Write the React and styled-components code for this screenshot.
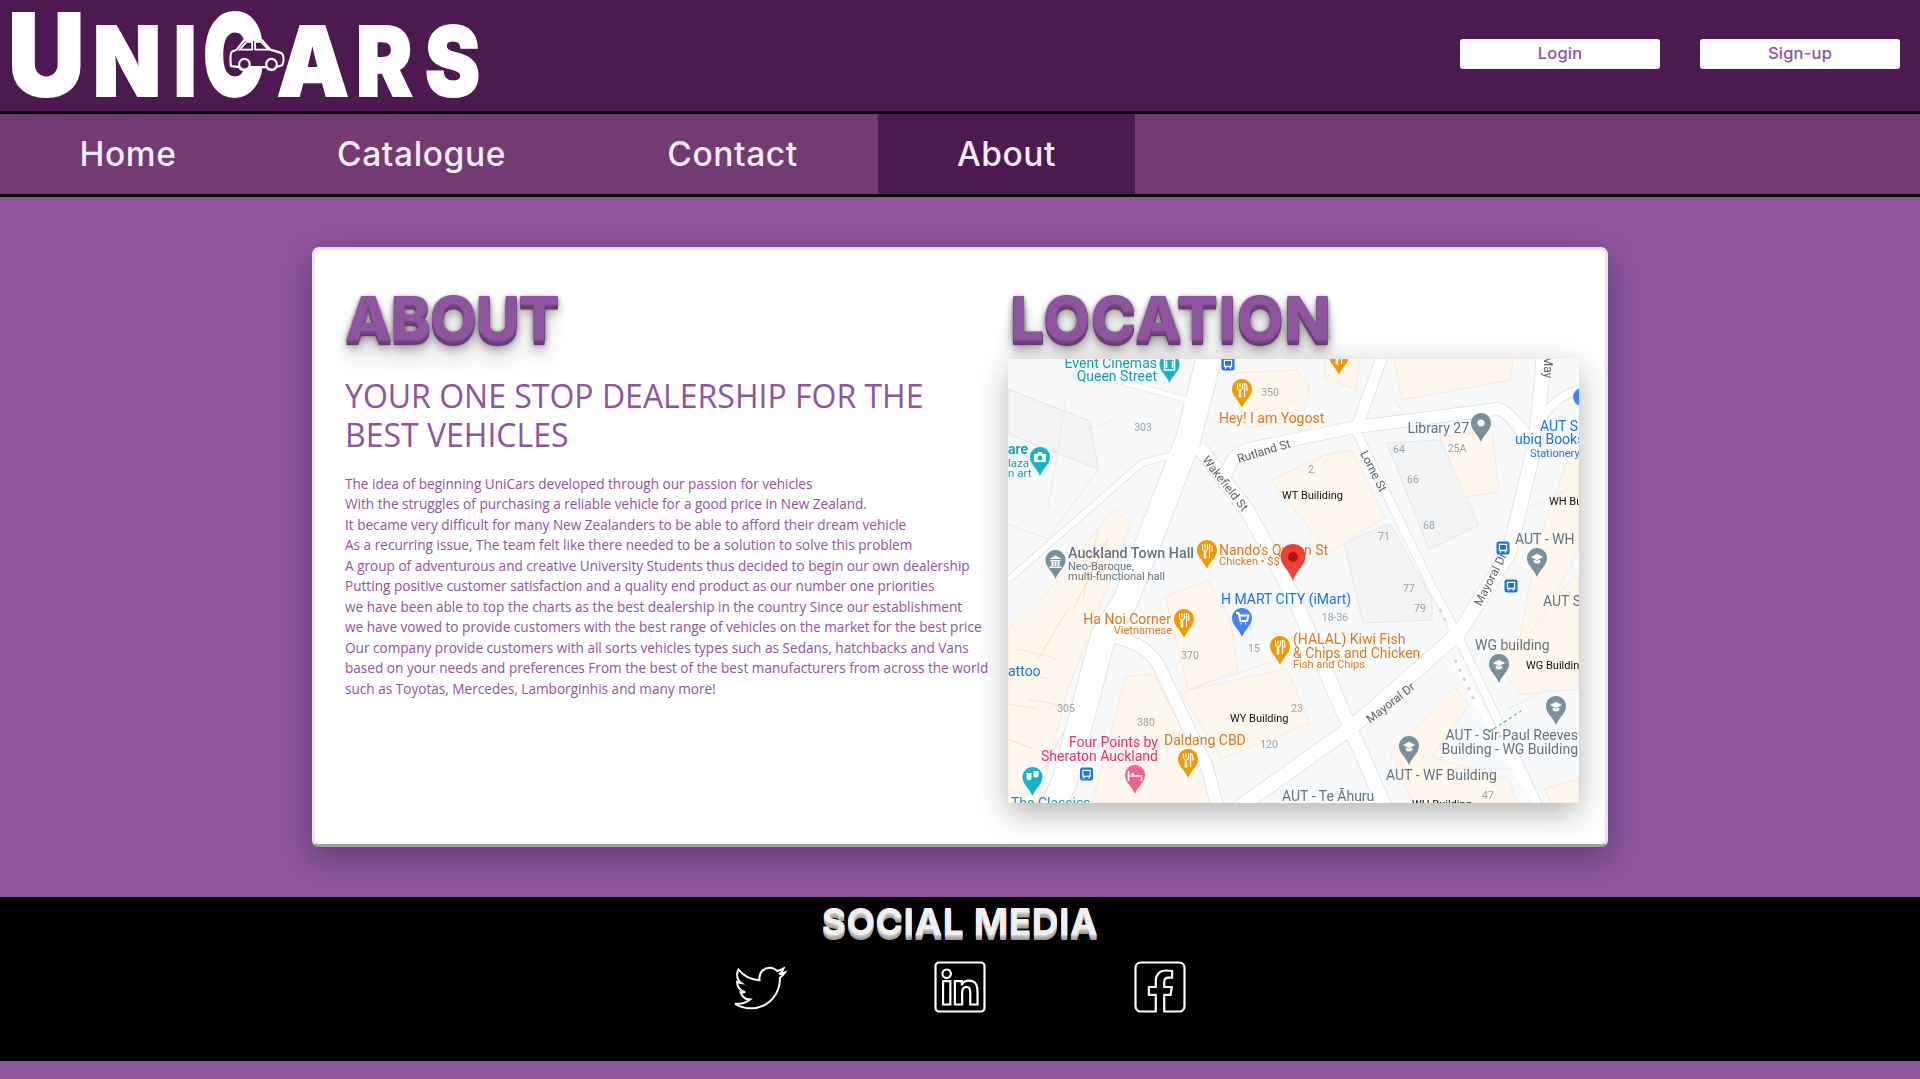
import React from 'react';
import styled, { createGlobalStyle } from 'styled-components';
import { FaTwitter, FaLinkedin, FaFacebookSquare } from 'react-icons/fa';

const Global = createGlobalStyle`
  html, body { margin: 0; padding: 0; background: #8e549e; }
  * { box-sizing: border-box; }
`;
const Page = styled.div`
  width: 100%; min-height: 1079px; background: #8e549e; display: flex; flex-direction: column;
  font-family: "Open Sans", sans-serif;
`;
const Header = styled.header`
  height: 114px; background: #4d1950; border-bottom: 3px solid #000; display: flex;
  align-items: flex-start; justify-content: space-between; padding-right: 20px;
`;
const Logo = styled.div`
  position: relative; display: flex; align-items: flex-end; height: 97px; margin-left: 8px; color: #fff;
  font-family: Inter, "Liberation Sans", sans-serif; font-weight: 900; line-height: 1;
  -webkit-text-stroke: 2px #fff;
`;
const LogoLetter = styled.span`
  display: block; font-size: ${p => p.$size}px; width: ${p => p.$w}px; margin-left: ${p => p.$gap || 0}px;
  line-height: ${p => p.$size * 0.727}px; transform: scaleX(${p => p.$sx}); transform-origin: left bottom;
  white-space: nowrap;
`;
const LogoCar = styled.svg`
  position: absolute; left: 220px; top: 38px; width: 58px; height: 35px;
`;
const Auth = styled.div`display: flex; gap: 40px; padding-top: 39px;`;
const AuthButton = styled.button`
  width: 200px; height: 30px; border: 0; border-radius: 3px; background: #fff; color: #8e549e; padding: 0 0 2px;
  font: 500 16.500px Inter, sans-serif; letter-spacing: .2px;
`;
const Nav = styled.nav`
  height: 83px; background: #733a74; border-bottom: 3px solid #000; display: flex;
`;
const Tab = styled.a`
  width: ${p => p.$w}px; height: 80px; display: flex; align-items: center; justify-content: center;
  background: ${p => p.$active ? '#4d1950' : 'transparent'}; color: #f2eef3;
  font: 500 33.500px Inter, sans-serif; letter-spacing: .6px; padding-bottom: 1px;
`;
const Main = styled.main`padding: 50px 312px;`;
const Card = styled.section`
  height: 600px; background: #fff; border: 3px solid #e6e6e6; border-bottom-color: #a0a0a0; border-radius: 7px;
  box-shadow: 0 10px 30px rgba(0,0,0,.3); display: grid; grid-template-columns: 663px 571px; padding: 27px 0 0 30px;
`;
const Shadow3d = `
  text-shadow: 0 1px 0 #7a4689, 0 2px 0 #764285, 0 3px 0 #713e80, 0 4px 0 #6d3a7c, 0 5px 0 #693678,
    0 6px 1px rgba(0,0,0,.1), 0 0 5px rgba(0,0,0,.1), 0 1px 3px rgba(0,0,0,.3), 0 3px 5px rgba(0,0,0,.2),
    0 5px 10px rgba(0,0,0,.25), 0 10px 10px rgba(0,0,0,.2), 0 20px 20px rgba(0,0,0,.15);
`;
const Title = styled.h1`
  margin: 0; padding-left: ${p => p.$pad || 0}px; font: 800 61px/82px Inter, sans-serif; letter-spacing: ${p => p.$ls}px;
  color: #8e549e; height: 82px; ${Shadow3d}
`;
const Sub = styled.h2`
  margin: 17px 0 0; font: 400 32px/39px "Open Sans", sans-serif; color: #8e549e; width: 640px;
`;
const Body = styled.p`
  margin: 20px 0 0; font: 400 13.600px/20.45px "Open Sans", sans-serif; color: #8e549e; white-space: nowrap;
`;
const MapBox = styled.div`
  width: 571px; height: 444px; box-shadow: 0 10px 30px rgba(0,0,0,.3); background: #f8f9fa; overflow: hidden;
`;
const MapSvg = styled.svg`display: block; width: 571px; height: 444px; font-family: Roboto, sans-serif; filter: blur(.25px);`;
const Footer = styled.footer`
  height: 164px; background: #000; display: flex; flex-direction: column; align-items: center;
`;
const FooterTitle = styled.h3`
  margin: 0; padding-top: 2px; font: 700 37px/46px Inter, sans-serif; letter-spacing: .6px; color: #f0f0f0;
  text-shadow: 0 1px 0 #ccc, 0 2px 0 #c0c0c0, 0 3px 0 #b0b0b0, 0 4px 0 #a5a5a5, 0 5px 0 #999;
`;
const Socials = styled.div`display: flex; margin-top: 15px;`;
const Social = styled.a`
  width: 200px; display: flex; justify-content: center; color: #fff; height: 54px; align-items: center;
  svg { fill: none; stroke: #fff; overflow: visible; }
  svg path { fill: none; }
`;

const pin = 'M0 0c-5.6 0-10 4.5-10 10 0 7.5 7 11 10 19 3-8 10-11.500 10-19 0-5.500-4.400-10-10-10z';
const colors = { food: '#f29900', teal: '#12b5cb', gray: '#78909c', blue: '#4285f4', pink: '#f06292' };
function Glyph({ kind }) {
  if (kind === 'food') return <path d="M-4.500 4.500v4c0 1.500 1 2 1.800 2.300v7h1.400v-7C-.5 10.500.5 10 .5 8.500v-4M-2 4.500v4M2.500 18V4.500c1.500 0 2.500 2 2.500 6.500H3.500" fill="none" stroke="#fff" strokeWidth="1.200" />;
  if (kind === 'edu') return <path d="M-6.500 9 0 5.500 6.500 9 0 12.500zM-3.500 12v2.500c2 1.600 5 1.600 7 0V12" fill="#fff" stroke={colors.gray} strokeWidth=".5" />;
  if (kind === 'cart') return <path d="M-6 5h2.500l2 8h6.500l1.500-5.500h-9M-1.500 15.500h1M3 15.500h1" fill="none" stroke="#fff" strokeWidth="2" />;
  if (kind === 'hall') return <path d="M-6 9 0 5.500 6 9zM-5 10h10v1.500h-10zM-4 12h2v4h-2zM-1 12h2v4h-2zM2 12h2v4H2zM-6 16.500H6V18H-6z" fill="#fff" />;
  if (kind === 'bed') return <path d="M-6.500 6v10M6.500 16v-5h-13M-4 9h3" fill="none" stroke="#fff" strokeWidth="1.600" />;
  if (kind === 'camera') return <g><path d="M-6 7h3l1.500-2h3L3 7h3v8H-6z" fill="#fff" /><circle cy="11" r="2.500" fill="#12b5cb" /></g>;
  if (kind === 'film') return <path d="M-5 5h10v11H-5zM-3 7v7M3 7v7" fill="none" stroke="#fff" strokeWidth="1.500" />;
  if (kind === 'mask') return <path d="M-6 6h5v5c0 3-5 3-5 0zM1 4h5v4c0 3-3 3-5 2z" fill="#fff" />;
  return <circle cy="10" r="3.500" fill="#fff" />;
}
const Pin = ({ x, y, c, g }) => (
  <g transform={`translate(${x} ${y})`}>
    <path d={pin} fill={colors[c]} />
    <Glyph kind={g} />
  </g>
);
const Bus = ({ x, y }) => (
  <g transform={`translate(${x - 6.500} ${y - 6.500})`}>
    <rect width="13" height="13" rx="2.500" fill="#1a73e8" />
    <path d="M3 3h7v6H3zM4 10v1.200M9 10v1.200" fill="none" stroke="#fff" strokeWidth="1.400" />
    <rect x="3.500" y="3.500" width="6" height="3" fill="#1a73e8" />
  </g>
);
const roads = [
  ['M202 -5 180 81 118 241 95 278 57 421 44 450', 25],
  ['M375 -5 348 71', 11],
  ['M218 116C222 102 228 94 240 90L348 68 489 50C500 50 510 68 524 84', 12],
  ['M191 88 241 154 287 241 340 364 378 450', 14],
  ['M348 72 424 228 447 271 532 450', 8],
  ['M536 -5 528 81 501 194 451 274 344 368 229 450', 14],
  ['M96 276C125 280 140 290 150 305L199 408 210 450', 12],
  ['M172 94 134 104 0 221', 6],
  ['M107 21 180 41', 5],
  ['M571 30C545 40 535 55 528 70', 8],
];
const peach = [
  '263,121 317,96 344,91 377,158 321,194',
  '386,-1 505,-1 502,21 394,41',
  '225,14 289,11 302,28 294,61 237,69',
  '317,-1 352,-1 348,31 317,19',
  '432,78 484,71 491,133 457,138',
  '0,270 40,232 106,150 123,165 95,240 60,330 30,444 0,444',
  '157,238 200,221 222,260 230,311 180,331',
  '180,331 279,310 302,364 214,400 172,332',
  '84,444 118,318 145,315 195,410 210,444',
  '382,394 447,328 461,346 424,398 501,421 509,444 405,444',
  '484,298 571,215 571,330 512,335',
  '536,430 571,420 571,444 544,444',
  '560,100 571,85 571,190 540,250 510,290 528,190',
];
const gray = ['379,84 432,81 471,166 421,191', '336,184 382,164 424,240 424,261 355,264', '0,30 82,62 90,110 0,75'];
const lines = ['M0 165 40 180 90 110M58 40 40 150M107 60 82 70', 'M215 120 225 90M300 120 330 90', 'M180 331 272 300M245 280 235 235M400 60 386 40M560 130 500 160', 'M440 410 520 410', 'M500 350 540 330'];
const hallLines = ['M30 300 60 250M20 340 70 350M40 400 75 340', 'M100 180 65 250M90 170 75 240M75 200 105 210', 'M0 345 30 350M0 380 25 390M10 290 50 300M0 310 40 320'];

const T = ({ x, y, c, s = 14, a, w, children, r }) => (
  <text x={x} y={y} fill={c} fontSize={s} textAnchor={a} fontWeight={w} transform={r ? `rotate(${r} ${x} ${y})` : undefined}>{children}</text>
);
const N = ({ x, y, children }) => <T x={x} y={y} c="#9aa0a6" s={10.500} a="middle">{children}</T>;
const R = ({ x, y, r, children }) => <T x={x} y={y} c="#5f6368" s={12} a="middle" r={r}>{children}</T>;

function MapDrawing() {
  const orange = '#d9791c', teal = '#129eaf', blue = '#1a73e8', slate = '#637381', pink = '#e8306f';
  return (
    <MapSvg viewBox="0 0 571 444">
      <rect width="571" height="444" fill="#f8f9fa" />
      {gray.map(p => <polygon key={p} points={p} fill="#f1f3f4" stroke="#dfe1e5" strokeWidth=".8" />)}
      {peach.map(p => <polygon key={p} points={p} fill="#fef7ee" stroke="#fce8d3" strokeWidth="1" />)}
      {lines.map(d => <path key={d} d={d} fill="none" stroke="#e4e6ea" strokeWidth=".8" />)}
      {hallLines.map(d => <path key={d} d={d} fill="none" stroke="#fbe3c9" strokeWidth="1.200" />)}
      {roads.map(([d, w]) => <path key={d} d={d} fill="none" stroke="#dadce0" strokeWidth={w + 1.400} strokeLinejoin="round" />)}
      {roads.map(([d, w]) => <path key={d + 'w'} d={d} fill="none" stroke="#fff" strokeWidth={w} strokeLinejoin="round" />)}
      <path d="M447 301 470 345 532 450" fill="none" stroke="#fff" strokeWidth="7" />
      <path d="M432 250 440 268M447 301 468 345M483 370 497 382" fill="none" stroke="#cfd3d7" strokeWidth="3" strokeDasharray="3 7" />
      <path d="M481 373 513 352" stroke="#5bb974" strokeDasharray="3 3" strokeWidth="1.300" />

      <T x={149} y={9} c={teal} a="end">Event Cinemas</T>
      <T x={149} y={22} c={teal} a="end">Queen Street</T>
      <Pin x={161.500} y={-5} c="teal" g="film" />
      <Bus x={220} y={5} />
      <Pin x={331} y={-13} c="food" g="food" />
      <Pin x={234} y={20} c="food" g="food" />
      <N x={262} y={37}>350</N>
      <T x={211} y={64} c={orange}>Hey! I am Yogost</T>
      <N x={135} y={72}>303</N>
      <R x={257} y={96} r={-17}>Rutland St</R>
      <T x={461} y={74} c={slate} a="end">Library 27</T>
      <Pin x={473} y={54} c="gray" />
      <T x={532} y={72} c={blue}>AUT S</T>
      <T x={507} y={85} c={blue}>ubiq Books</T>
      <T x={522} y={98} c={blue} s={11}>Stationery</T>
      <circle cx="574" cy="38" r="9" fill="#4285f4" />
      <N x={391} y={94}>64</N><N x={449} y={93}>25A</N><N x={405} y={124}>66</N><N x={421} y={170}>68</N><N x={303} y={114}>2</N>
      <T x={274} y={140} c="#111" s={11}>WT Builiding</T>
      <R x={362} y={114} r={63}>Lorne St</R>
      <R x={214} y={127} r={52}>Wakefield St</R>
      <T x={0} y={95} c={teal} w={600} s={14}>are</T>
      <T x={0} y={108} c={teal} s={11.500}>laza</T>
      <T x={0} y={118} c={teal} s={11.500}>n art</T>
      <Pin x={32} y={88} c="teal" g="camera" />
      <T x={541} y={146} c="#111" s={11}>WH Bu</T>
      <N x={376} y={181}>71</N><N x={401} y={233}>77</N>
      <T x={60} y={199} c={slate} s={14.300} w={500}>Auckland Town Hall</T>
      <T x={60} y={211} c={slate} s={11}>Neo-Baroque,</T>
      <T x={60} y={221} c={slate} s={11}>multi-functional hall</T>
      <Pin x={47.500} y={191} c="gray" g="hall" />
      <T x={211} y={196} c={orange}>Nando's Queen St</T>
      <T x={211} y={206} c={orange} s={11}>Chicken • $$</T>
      <Pin x={199} y={181} c="food" g="food" />
      <T x={507} y={185} c={slate}>AUT - WH</T>
      <Bus x={495} y={189} /><Bus x={503} y={227} />
      <Pin x={529} y={189} c="gray" g="edu" />
      <R x={486} y={222} r={-63}>Mayoral Dr</R>
      <R x={536} y={8} r={90}>May</R>
      <T x={535} y={247} c={slate}>AUT S</T>
      <T x={213} y={245} c={blue}>H MART CITY (iMart)</T>
      <Pin x={234} y={249} c="blue" g="cart" />
      <N x={327} y={262}>18-36</N><N x={412} y={253}>79</N>
      <T x={163} y={265} c={orange} a="end">Ha Noi Corner</T>
      <T x={164} y={275} c={orange} s={11} a="end">Vietnamese</T>
      <Pin x={176} y={250} c="food" g="food" />
      <Pin x={272} y={277} c="food" g="food" />
      <T x={285} y={285} c={orange}>(HALAL) Kiwi Fish</T>
      <T x={285} y={299} c={orange}>&amp; Chips and Chicken</T>
      <T x={285} y={309} c={orange} s={11}>Fish and Chips</T>
      <N x={246} y={293}>15</N><N x={182} y={300}>370</N>
      <T x={0} y={317} c={blue}>attoo</T>
      <T x={467} y={291} c={slate}>WG building</T>
      <Pin x={491} y={295} c="gray" g="edu" />
      <T x={518} y={310} c="#111" s={11}>WG Buildin</T>
      <Pin x={548} y={337} c="gray" g="edu" />
      <R x={385} y={347} r={-38}>Mayoral Dr</R>
      <T x={222} y={363} c="#111" s={11}>WY Building</T>
      <N x={289} y={353}>23</N><N x={58} y={353}>305</N><N x={138} y={367}>380</N><N x={261} y={389}>120</N>
      <T x={150} y={388} c={pink} a="end">Four Points by</T>
      <T x={150} y={402} c={pink} a="end">Sheraton Auckland</T>
      <T x={156} y={386} c={orange}>Daldang CBD</T>
      <Pin x={180} y={390} c="food" g="food" />
      <Pin x={127} y={406} c="pink" g="bed" />
      <Bus x={78.500} y={415} />
      <Pin x={24.500} y={408} c="teal" g="mask" />
      <T x={3} y={449} c={teal}>The Classics</T>
      <Pin x={401} y={377} c="gray" g="edu" />
      <T x={570} y={381} c={slate} a="end">AUT - Sir Paul Reeves</T>
      <T x={570} y={395} c={slate} a="end">Building - WG Building</T>
      <T x={378} y={421} c={slate}>AUT - WF Building</T>
      <T x={274} y={442} c={slate}>AUT - Te Āhuru</T>
      <N x={480} y={440}>47</N>
      <T x={404} y={449} c="#111" s={11}>WH Building</T>
      <path d="M285 185c-7 0-12.500 5.500-12.500 12.500 0 9 9.500 14 12.500 24.500 3-10.500 12.500-15.500 12.500-24.500 0-7-5.500-12.500-12.500-12.500z" fill="#ea4335" />
      <circle cx="285" cy="198" r="5" fill="#b31412" />
    </MapSvg>
  );
}

const aboutLines = [
  'The idea of beginning UniCars developed through our passion for vehicles',
  'With the struggles of purchasing a reliable vehicle for a good price in New Zealand.',
  'It became very difficult for many New Zealanders to be able to afford their dream vehicle',
  'As a recurring issue, The team felt like there needed to be a solution to solve this problem',
  'A group of adventurous and creative University Students thus decided to begin our own dealership',
  'Putting positive customer satisfaction and a quality end product as our number one priorities',
  'we have been able to top the charts as the best dealership in the country Since our establishment',
  'we have vowed to provide customers with the best range of vehicles on the market for the best price',
  'Our company provide customers with all sorts vehicles types such as Sedans, hatchbacks and Vans',
  'based on your needs and preferences From the best of the best manufacturers from across the world',
  'such as Toyotas, Mercedes, Lamborginhis and many more!',
];

export default function App() {
  return (
    <Page>
      <Global />
      <Header>
        <Logo>
          <LogoLetter $size={114} $w={75} $sx={.93}>U</LogoLetter>
          <LogoLetter $size={96} $w={64} $gap={10} $sx={.92}>N</LogoLetter>
          <LogoLetter $size={96} $w={18} $gap={17} $sx={.8}>I</LogoLetter>
          <LogoLetter $size={114} $w={63} $gap={11} $sx={.72}>C</LogoLetter>
          <LogoLetter $size={96} $w={68} $gap={11} $sx={.94}>A</LogoLetter>
          <LogoLetter $size={96} $w={58} $gap={11} $sx={.88}>R</LogoLetter>
          <LogoLetter $size={96} $w={53} $gap={11} $sx={.86}>S</LogoLetter>
          <LogoCar viewBox="0 0 60 36">
            <path d="M4 14c-2 2-1.500 10-1 15l9 1c0 4 9 4 10 0h18c1 4 9 4 10 0l6-2c2-4 2-8 0-12-4-2-9-3-12-4L35 2H17L9 12z" fill="#4d1950" stroke="#fff" strokeWidth="2.200" strokeLinejoin="round" />
            <path d="M12 12 19 4h6v8zM28 4h6l8 8H28z" fill="none" stroke="#fff" strokeWidth="1.800" />
            <circle cx="17" cy="27" r="5.500" fill="#4d1950" stroke="#fff" strokeWidth="2.200" />
            <circle cx="45" cy="27" r="5.500" fill="#4d1950" stroke="#fff" strokeWidth="2.200" />
          </LogoCar>
        </Logo>
        <Auth>
          <AuthButton>Login</AuthButton>
          <AuthButton>Sign-up</AuthButton>
        </Auth>
      </Header>
      <Nav>
        <Tab $w={256}>Home</Tab>
        <Tab $w={331}>Catalogue</Tab>
        <Tab $w={291}>Contact</Tab>
        <Tab $w={257} $active>About</Tab>
      </Nav>
      <Main>
        <Card>
          <div>
            <Title $ls={-1.4}>ABOUT</Title>
            <Sub>YOUR ONE STOP DEALERSHIP FOR THE BEST VEHICLES</Sub>
            <Body>{aboutLines.map(l => <React.Fragment key={l}>{l}<br /></React.Fragment>)}</Body>
          </div>
          <div>
            <Title $ls={.5} $pad={2}>LOCATION</Title>
            <MapBox><MapDrawing /></MapBox>
          </div>
        </Card>
      </Main>
      <Footer>
        <FooterTitle>SOCIAL MEDIA</FooterTitle>
        <Socials>
          <Social><FaTwitter size={50} strokeWidth={20} style={{ marginTop: 2 }} /></Social>
          <Social><FaLinkedin size={56} strokeWidth={20} /></Social>
          <Social><FaFacebookSquare size={56} strokeWidth={20} /></Social>
        </Socials>
      </Footer>
    </Page>
  );
}
